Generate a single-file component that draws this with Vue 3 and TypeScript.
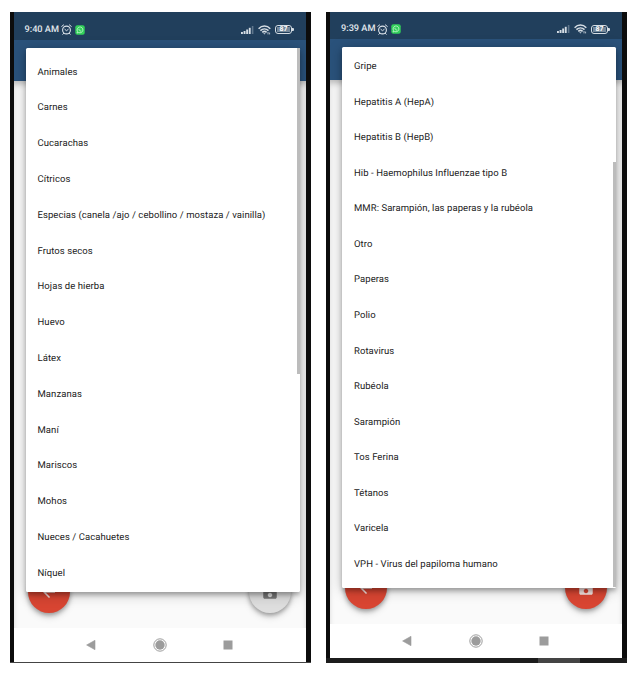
<script setup lang="ts">
interface Phone {
  id: string
  time: string
  canSave: boolean
  options: string[]
}

const phones: Phone[] = [
  {
    id: 'allergies',
    time: '9:40 AM',
    canSave: false,
    options: [
      'Animales',
      'Carnes',
      'Cucarachas',
      'Cítricos',
      'Especias (canela /ajo / cebollino / mostaza / vainilla)',
      'Frutos secos',
      'Hojas de hierba',
      'Huevo',
      'Látex',
      'Manzanas',
      'Maní',
      'Mariscos',
      'Mohos',
      'Nueces / Cacahuetes',
      'Níquel',
    ],
  },
  {
    id: 'vaccines',
    time: '9:39 AM',
    canSave: true,
    options: [
      'Gripe',
      'Hepatitis A (HepA)',
      'Hepatitis B (HepB)',
      'Hib - Haemophilus Influenzae tipo B',
      'MMR: Sarampión, las paperas y la rubéola',
      'Otro',
      'Paperas',
      'Polio',
      'Rotavirus',
      'Rubéola',
      'Sarampión',
      'Tos Ferina',
      'Tétanos',
      'Varicela',
      'VPH - Virus del papiloma humano',
    ],
  },
]
</script>

<template>
  <main class="page">
    <section v-for="phone in phones" :key="phone.id" class="phone" :class="phone.id">
      <div class="screen">
        <header class="status">
          <span class="time">{{ phone.time }}</span>
          <svg class="alarm" viewBox="0 0 11 11" fill="none" stroke="#dbe3ea" stroke-linecap="round">
            <circle cx="5.5" cy="6" r="3.9" stroke-width="1.1" />
            <path d="M.7 2.4 2.6.9M10.3 2.4 8.4.9M3.9 5.4l1.6 1.3 1.7-1.3M2.6 9.4l-.8.9M8.4 9.4l.8.9" stroke-width="1" />
          </svg>
          <svg class="chat" viewBox="0 0 10 10">
            <rect x=".3" y=".3" width="9.4" height="9.4" rx="2" fill="#32d15a" />
            <path d="M2.1 8l.4-1.6a2.9 2.9 0 1 1 1.2 1.1z" fill="none" stroke="#c9f5d3" stroke-width=".8" />
            <path d="M3.9 3.8c0 1.3 1.1 2.3 2.4 2.4" fill="none" stroke="#c9f5d3" stroke-width=".9" />
          </svg>
          <svg class="signal" viewBox="0 0 13 8" fill="#d5dde4">
            <rect x="0" y="6" width="1.9" height="2" />
            <rect x="2.6" y="5" width="1.9" height="3" />
            <rect x="5.2" y="3.5" width="1.9" height="4.5" />
            <rect x="7.8" y="1.8" width="1.9" height="6.2" />
            <rect x="10.8" y="0" width="1.6" height="8" opacity=".35" />
          </svg>
          <svg class="wifi" viewBox="0 0 13 10" fill="none" stroke="#d5dde4" stroke-width="1.5">
            <path d="M.6 3.7c3.4-3.5 8.3-3.5 11.7 0M2.4 5.6c2.4-2.3 5.7-2.3 8.1 0M4.3 7.4c1.3-1.2 3-1.2 4.3 0" />
            <path d="M5.2 8.2h2.4L6.4 9.5z" fill="#d5dde4" stroke="none" />
            <path d="M10 7v2.4M11.6 7.6v1.8" stroke-width=".8" />
          </svg>
          <span class="battery"><span class="level">87</span></span>
        </header>
        <div class="appbar"></div>
        <div class="content">
          <span class="fab back">
            <svg viewBox="0 0 24 24"><path d="M20 11H7.83l5.59-5.59L12 4l-8 8 8 8 1.41-1.41L7.83 13H20v-2z" /></svg>
          </span>
          <span class="fab save" :class="{ disabled: !phone.canSave }">
            <svg viewBox="0 0 24 24"><path d="M17 3H5a2 2 0 0 0-2 2v14c0 1.1.89 2 2 2h14c1.1 0 2-.9 2-2V7l-4-4zm-5 16c-1.66 0-3-1.34-3-3s1.34-3 3-3 3 1.34 3 3-1.34 3-3 3zm3-10H5V5h10v4z" /></svg>
          </span>
        </div>
        <nav class="nav">
          <svg viewBox="0 0 14 14"><path d="M2.6 7 11 2.3v9.4z" fill="#9c9c9c" stroke="#9c9c9c" stroke-width=".6" stroke-linejoin="round" /></svg>
          <svg viewBox="0 0 14 14"><circle cx="7" cy="7" r="6.2" fill="none" stroke="#9c9c9c" /><circle cx="7" cy="7" r="4.7" fill="#9c9c9c" /></svg>
          <svg viewBox="0 0 14 14"><rect x="2.5" y="2.5" width="9" height="9" fill="#9c9c9c" /></svg>
        </nav>
        <ul class="menu">
          <li v-for="option in phone.options" :key="option"><span>{{ option }}</span></li>
        </ul>
      </div>
      <div class="edge"><i></i></div>
    </section>
  </main>
</template>

<style>
body {
  margin: 0;
  background: #fff;
}
</style>

<style scoped>
.page {
  box-sizing: border-box;
  width: 642px;
  height: 673px;
  padding: 12px 15px 10px 10px;
  display: flex;
  justify-content: space-between;
  overflow: hidden;
  background: #fff;
  font-family: Roboto, "Liberation Sans", sans-serif;
  text-rendering: geometricPrecision;
}
.phone {
  box-sizing: border-box;
  width: 301px;
  height: 651px;
  display: flex;
  flex-direction: column;
  background: #0c0c0c;
}
.allergies {
  --status: 28px;
  --bar: 41px;
  --nav: 34px;
  --item: 35.8px;
  --menu-x: 12px;
  --menu-y: 36px;
  --menu-w: 274.5px;
  --menu-h: 544px;
  --pad: 6.8px;
  --fab-y: 559px;
  --thumb-y: 0px;
  --thumb-h: 326px;
  padding: 0 5px 0 3.5px;
}
.vaccines {
  --status: 27px;
  --bar: 41px;
  --nav: 34px;
  --item: 35.57px;
  --menu-x: 12px;
  --menu-y: 35px;
  --menu-w: 274px;
  --menu-h: 540.5px;
  --pad: 2.3px;
  --fab-y: 554.5px;
  --thumb-y: 115px;
  --thumb-h: 425px;
  padding: 0 5px 0 4px;
}
.screen {
  position: relative;
  flex: 1;
  display: flex;
  flex-direction: column;
  overflow: hidden;
  background: #fafafa;
}
.status {
  box-sizing: border-box;
  height: var(--status);
  padding: 7px 13px 0 11px;
  display: flex;
  align-items: center;
  background: #213f5c;
  color: #e2e8ed;
}
.time {
  width: 36px;
  font-size: 9.2px;
  font-weight: 500;
  line-height: 12px;
  white-space: nowrap;
}
.alarm {
  width: 11px;
  height: 11px;
}
.chat {
  width: 10px;
  height: 10px;
  margin-left: 3px;
}
.signal {
  width: 13px;
  height: 8px;
  margin-left: auto;
}
.wifi {
  width: 13px;
  height: 10px;
  margin: 0 4px;
}
.battery {
  position: relative;
  box-sizing: border-box;
  width: 17px;
  height: 9px;
  padding: 1px;
  border: 1px solid #d5dde4;
  border-radius: 3px;
  margin-right: 1px;
}
.battery::after {
  content: "";
  position: absolute;
  right: -2.5px;
  top: 2px;
  width: 1.5px;
  height: 3px;
  border-radius: 0 1px 1px 0;
  background: #d5dde4;
}
.level {
  display: block;
  height: 5px;
  background: #75899b;
  color: #fff;
  font-size: 7px;
  font-weight: 700;
  line-height: 5.5px;
  text-align: center;
}
.appbar {
  height: var(--bar);
  background: #2a527b;
}
.content {
  flex: 1;
  background: #fafafa;
  box-shadow: inset 0 5px 6px -2px rgba(0, 0, 0, .25);
}
.fab {
  position: absolute;
  top: var(--fab-y);
  width: 42px;
  height: 42px;
  border-radius: 50%;
  display: flex;
  align-items: center;
  justify-content: center;
  background: #d84532;
  box-shadow: 0 2px 4px rgba(0, 0, 0, .3), 0 4px 7px rgba(0, 0, 0, .15);
}
.fab svg {
  width: 18px;
  height: 18px;
  fill: #f6e4e1;
}
.back {
  left: 14.8px;
}
.save {
  right: 15px;
}
.fab.disabled {
  background: #dedede;
}
.fab.disabled svg {
  fill: #777;
}
.nav {
  position: relative;
  box-sizing: border-box;
  height: var(--nav);
  padding-left: 70px;
  display: flex;
  align-items: center;
  gap: 54.5px;
  background: #fff;
}
.nav svg {
  width: 14px;
  height: 14px;
}
.allergies .nav {
  padding-left: 70.5px;
}
.menu {
  position: absolute;
  left: var(--menu-x);
  top: var(--menu-y);
  box-sizing: border-box;
  width: var(--menu-w);
  height: var(--menu-h);
  margin: 0;
  padding: var(--pad) 0 0;
  border-radius: 1.5px;
  list-style: none;
  background: #fff;
  box-shadow: 0 3px 4px rgba(0, 0, 0, .25), 0 2px 14px rgba(0, 0, 0, .25);
}
.menu::after {
  content: "";
  position: absolute;
  right: 0;
  top: var(--thumb-y);
  width: 3.5px;
  height: var(--thumb-h);
  background: #bcbcbc;
}
.menu li {
  height: var(--item);
  padding-left: 12px;
  display: flex;
  align-items: center;
  color: #222;
  font-size: 9.5px;
  line-height: 12px;
  letter-spacing: .065px;
  white-space: nowrap;
}
.edge {
  height: 1px;
  margin: 0 -5px 0 -4px;
  background: #444;
}
.vaccines .edge {
  height: 5.5px;
  display: flex;
  background: #1c1c1c;
}
.edge i {
  width: 42px;
  margin-left: 212px;
}
.vaccines .edge i {
  background: #444;
}
</style>
